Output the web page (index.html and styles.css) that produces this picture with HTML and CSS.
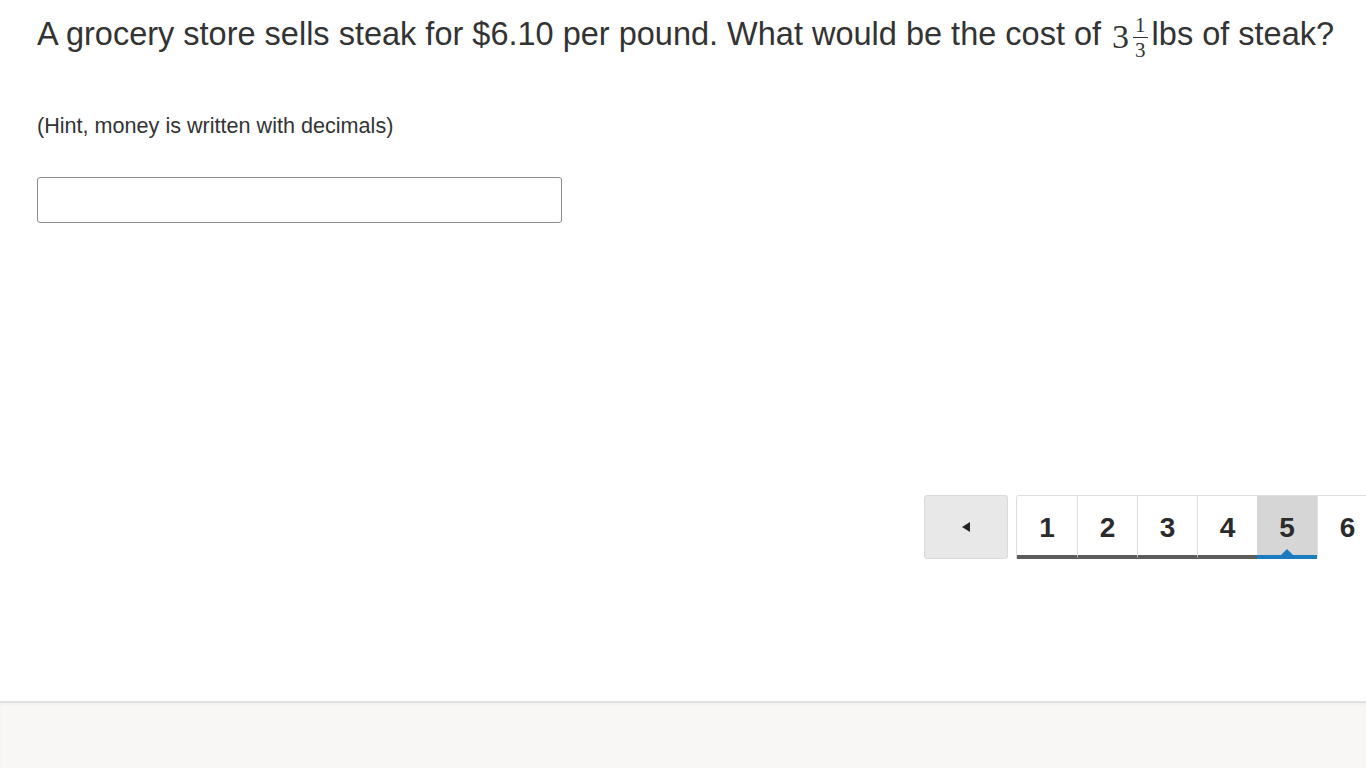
FILE: index.html
```html
<!DOCTYPE html>
<html>
<head>
<meta charset="utf-8">
<link rel="stylesheet" href="styles.css">
</head>
<body>
<main class="page">
  <h1 class="question">A grocery store sells steak for $6.10 per pound. What would be the cost of <span class="math"><span class="whole">3</span><span class="frac"><span class="num">1</span><span class="den">3</span></span></span>lbs of steak?</h1>
  <p class="hint">(Hint, money is written with decimals)</p>
  <input class="answer" type="text">
  <nav class="pager">
    <button class="prev"><svg width="12" height="12" viewBox="0 0 12 12"><path d="M10 1 L2 6 L10 11 Z" fill="#222"/></svg></button>
    <ol class="pages">
      <li class="pg done">1</li>
      <li class="pg done">2</li>
      <li class="pg done">3</li>
      <li class="pg done">4</li>
      <li class="pg current">5</li>
      <li class="pg">6</li>
    </ol>
  </nav>
</main>
<footer class="footer"></footer>
</body>
</html>
```
FILE: styles.css
```css
html, body {
  margin: 0;
  padding: 0;
  background: #fff;
}
body {
  font-family: "Liberation Sans", Arial, sans-serif;
  color: #333;
  overflow: hidden;
  height: 768px;
}
.page {
  height: 701px;
  padding: 0 0 0 37px;
  box-sizing: border-box;
  overflow: hidden;
}
.question {
  margin: 0;
  padding-top: 14px;
  height: 50px;
  font-size: 32.5px;
  font-weight: normal;
  line-height: 40px;
  white-space: nowrap;
  color: #333;
}
.math {
  font-family: "Liberation Serif", "DejaVu Serif", serif;
  display: inline-flex;
  align-items: center;
  vertical-align: -3px;
  margin-left: 2px;
  margin-right: 4px;
}
.whole {
  font-size: 34px;
  line-height: 34px;
}
.frac {
  display: inline-flex;
  flex-direction: column;
  align-items: center;
  font-size: 21px;
  line-height: 20px;
  margin-left: 4px;
}
.num {
  border-bottom: 1px solid #333;
  padding: 0 2px 2px;
}
.den {
  padding-top: 2px;
}
.hint {
  margin: 49px 0 0;
  font-size: 21.6px;
  line-height: 26px;
  color: #333;
}
.answer {
  display: block;
  margin-top: 38px;
  width: 525px;
  height: 46px;
  box-sizing: border-box;
  border: 1px solid #8c8c8c;
  border-radius: 3px;
  background: #fff;
  font-size: 18px;
}
.pager {
  display: flex;
  margin-top: 272px;
  margin-left: 887px;
  gap: 8px;
}
.prev {
  flex-shrink: 0;
  width: 84px;
  height: 64px;
  box-sizing: border-box;
  background: #e8e8e8;
  border: 1px solid #d9d9d9;
  border-radius: 3px;
  display: flex;
  align-items: center;
  justify-content: center;
  padding: 0;
}
.pages {
  display: flex;
  flex-shrink: 0;
  list-style: none;
  margin: 0;
  padding: 0;
  border: 1px solid #ddd;
  border-bottom: none;
  border-radius: 3px 0 0 0;
  height: 64px;
  box-sizing: border-box;
}
.pg {
  width: 60px;
  height: 63px;
  box-sizing: border-box;
  display: flex;
  align-items: center;
  justify-content: center;
  font-size: 28px;
  font-weight: bold;
  color: #2b2b2b;
  border-left: 1px solid #ddd;
  border-bottom: 4px solid transparent;
  padding-top: 4px;
  position: relative;
}
.pg:first-child {
  border-left: none;
}
.pg.done {
  border-bottom-color: #5c5c5c;
}
.pg.current {
  background: #d6d6d6;
  border-bottom-color: #1a7bbf;
  border-left: none;
}
.pg.current::after {
  content: "";
  position: absolute;
  left: 50%;
  bottom: 0;
  margin-left: -6px;
  border-left: 6px solid transparent;
  border-right: 6px solid transparent;
  border-bottom: 6px solid #1a7bbf;
}
.pg:last-child {
  border-bottom: 4px solid transparent;
}
.footer {
  height: 67px;
  background: #f8f7f5;
  border-top: 2px solid #e2e2e2;
  box-shadow: inset 0 2px 3px rgba(0,0,0,0.03);
}
```
